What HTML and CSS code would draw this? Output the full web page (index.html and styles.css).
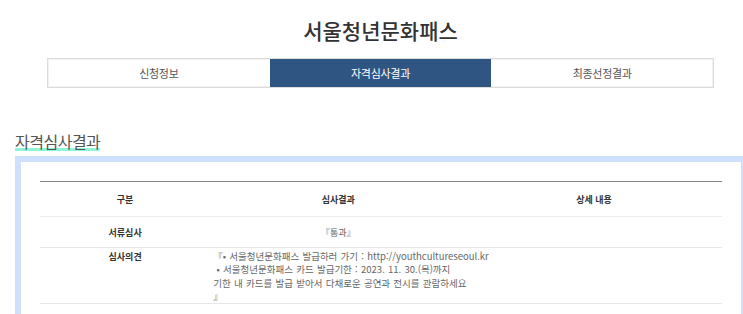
FILE: index.html
```html
<!DOCTYPE html>
<html lang="ko">
<head>
    <meta charset="UTF-8">
    <meta name="viewport" content="width=device-width, initial-scale=1.0">
    <title>서울청년문화패스</title>
    <link rel="stylesheet" href="styles.css">
</head>
<body>
    <header>
        <h1 class="site-title">서울청년문화패스</h1>
    </header>

    <nav class="tabs">
        <a class="tab">신청정보</a>
        <a class="tab active">자격심사결과</a>
        <a class="tab">최종선정결과</a>
    </nav>

    <h2 class="section-title"><span>자격심사결과</span></h2>

    <div class="result-box">
        <table class="result-table">
            <thead>
                <tr>
                    <th class="col-label">구분</th>
                    <th class="col-result">심사결과</th>
                    <th class="col-detail">상세 내용</th>
                </tr>
            </thead>
            <tbody>
                <tr class="row-doc">
                    <td class="label">서류심사</td>
                    <td class="result">『통과』</td>
                    <td></td>
                </tr>
                <tr class="row-opinion">
                    <td class="label">심사의견</td>
                    <td class="opinion" colspan="2">
                        『• 서울청년문화패스 발급하러 가기 : http://youthcultureseoul.kr<br>
                        &nbsp;• 서울청년문화패스 카드 발급기한 : 2023. 11. 30.(목)까지<br>
                        기한 내 카드를 발급 받아서 다채로운 공연과 전시를 관람하세요<br>
                        』
                    </td>
                </tr>
            </tbody>
        </table>
    </div>
</body>
</html>
```

FILE: styles.css
```css
html {
    overflow: hidden;
}

body {
    width: 761px;
    margin: 0;
    padding: 0;
    background-color: #fff;
    color: #333;
    font-family: "Noto Sans CJK KR", "Noto Sans", sans-serif;
}

header {
    padding-top: 15px;
    text-align: center;
}

.site-title {
    margin: 0;
    font-size: 21px;
    line-height: 30px;
    font-weight: 500;
    color: #333;
}

.tabs {
    display: flex;
    width: 665px;
    margin: 13px auto 0;
    border: 1px solid #dcdcdc;
    box-shadow: inset 0 0 0 1px #f2f2f2;
}

.tab {
    flex: 1;
    height: 28px;
    line-height: 28px;
    text-align: center;
    font-size: 11px;
    color: #555;
    letter-spacing: -0.3px;
}

.tab.active {
    background-color: #2f5583;
    color: #fff;
}

.section-title {
    margin: 42px 15px 0;
    font-size: 16px;
    line-height: 22px;
    font-weight: 400;
    color: #555;
    letter-spacing: -0.5px;
}

.section-title span {
    background: linear-gradient(transparent 80%, #8ff5da 80%, #8ff5da 92%, transparent 92%);
}

.result-box {
    width: 701px;
    height: 160px;
    margin: 4px 15px 0;
    padding: 19px 0 0 19px;
    border: 6px solid #cfe0fd;
    border-bottom: none;
}

.result-table {
    width: 682px;
    border-collapse: collapse;
    border-top: 1px solid #888;
    font-size: 9px;
}

.result-table th {
    height: 32px;
    font-weight: 700;
    color: #333;
    text-align: center;
    border-bottom: 1px solid #ececec;
}

.col-label {
    width: 170px;
}

.col-result,
.col-detail {
    width: 256px;
}

.result-table td {
    border-bottom: 1px solid #e6e6e6;
    vertical-align: top;
}

.row-doc td {
    height: 28px;
    vertical-align: middle;
}

.label {
    text-align: center;
    font-weight: 700;
    color: #333;
}

.result {
    text-align: center;
    color: #666;
}

.row-opinion .label {
    vertical-align: top;
    padding-top: 2px;
    line-height: 14px;
}

.opinion {
    padding: 2px 0 0 3px;
    font-size: 9.5px;
    word-spacing: 0.6px;
    line-height: 13.3px;
    color: #666;
    text-align: left;
}
```
